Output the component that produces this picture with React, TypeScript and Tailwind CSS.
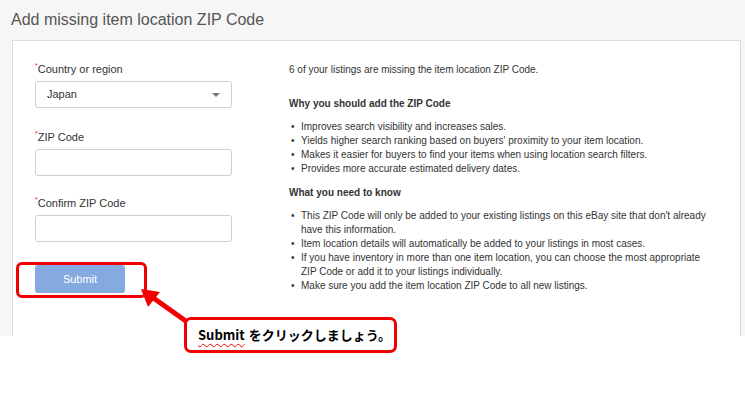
import React from "react";

const sans = { fontFamily: '"Liberation Sans", Arial, sans-serif' };

/* LABEL */

function Label({ text }: { text: string }) {
  return (
    <div className="h-[14px] text-[11px] leading-[14px] text-[#333] mb-[5px]">
      <span className="text-[7px] align-top leading-[8px] text-[#e0262c]">*</span>
      {text}
    </div>
  );
}

/* TEXT INPUT */

function Field() {
  return <div className="h-[27px] w-[197px] rounded-[3px] border border-[#cfcfcf] bg-white" />;
}

/* BULLET */

function Bullet({ children }: { children: React.ReactNode }) {
  return (
    <li className="flex">
      <span className="w-[12px] shrink-0 pl-[2px]">•</span>
      <span>{children}</span>
    </li>
  );
}

export default function App() {
  return (
    <div className="relative w-[745px] h-[414px] bg-white overflow-hidden" style={sans}>
      {/* EBAY PAGE */}
      <div className="h-[336px] bg-[#f6f6f6] flex flex-col">
        <h1 className="h-[40px] pl-[11px] pt-[10px] text-[16px] leading-[20px] font-light text-[#555]">
          Add missing item location ZIP Code
        </h1>

        <div className="flex-1 ml-[12px] mr-[4px] bg-white border-t border-l border-r border-[#dcdcdc] flex pt-[21px]">
          {/* LEFT FORM */}
          <div className="ml-[22px] w-[197px] flex flex-col">
            <Label text="Country or region" />
            <div className="h-[27px] rounded-[3px] border border-[#cfcfcf] bg-white flex items-center justify-between pl-[11px] pr-[11px] text-[11px] text-[#333]">
              <span>Japan</span>
              <span className="w-0 h-0 border-l-[4px] border-r-[4px] border-t-[4px] border-l-transparent border-r-transparent border-t-[#777]" />
            </div>

            <div className="mt-[22px]">
              <Label text="ZIP Code" />
              <Field />
            </div>

            <div className="mt-[20px]">
              <Label text="Confirm ZIP Code" />
              <Field />
            </div>

            <button className="mt-[23px] h-[28px] w-[90px] rounded-[3px] bg-[#84aadf] text-white text-[11px]">
              Submit
            </button>
          </div>

          {/* RIGHT INFO */}
          <div className="ml-[57px] mt-[1px] flex-1 text-[10px] leading-[14px] text-[#333]">
            <p>6 of your listings are missing the item location ZIP Code.</p>

            <h3 className="mt-[20px] font-bold">Why you should add the ZIP Code</h3>
            <ul className="mt-[9px]">
              <Bullet>Improves search visibility and increases sales.</Bullet>
              <Bullet>Yields higher search ranking based on buyers' proximity to your item location.</Bullet>
              <Bullet>Makes it easier for buyers to find your items when using location search filters.</Bullet>
              <Bullet>Provides more accurate estimated delivery dates.</Bullet>
            </ul>

            <h3 className="mt-[10px] font-bold">What you need to know</h3>
            <ul className="mt-[9px] pr-[30px]">
              <Bullet>This ZIP Code will only be added to your existing listings on this eBay site that don't already have this information.</Bullet>
              <Bullet>Item location details will automatically be added to your listings in most cases.</Bullet>
              <Bullet>If you have inventory in more than one item location, you can choose the most appropriate ZIP Code or add it to your listings individually.</Bullet>
              <Bullet>Make sure you add the item location ZIP Code to all new listings.</Bullet>
            </ul>
          </div>
        </div>
      </div>

      {/* ANNOTATION: highlight around submit */}
      <div className="absolute left-[16px] top-[262px] w-[131px] h-[36px] rounded-[6px] border-[3px] border-[#f20000]" />

      {/* ANNOTATION: arrow */}
      <svg className="absolute left-0 top-0" width="745" height="414">
        <line x1="190" y1="324" x2="152" y2="297" stroke="#f20000" strokeWidth="5" />
        <polygon points="141,289 148,307 160,292" fill="#f20000" />
      </svg>

      {/* ANNOTATION: callout */}
      <div
        className="absolute left-[184px] top-[317px] w-[213px] h-[36px] rounded-[7px] border-[3px] border-[#f20000] bg-white pl-[11px] flex items-center text-[13px] font-bold text-black"
        style={{ fontFamily: '"Noto Sans CJK JP", "Liberation Sans", sans-serif' }}
      >
        <span className="underline decoration-wavy decoration-[#f20000] decoration-1 underline-offset-[3px]">Submit</span>
        <span className="ml-[4px]">をクリックしましょう。</span>
      </div>
    </div>
  );
}
